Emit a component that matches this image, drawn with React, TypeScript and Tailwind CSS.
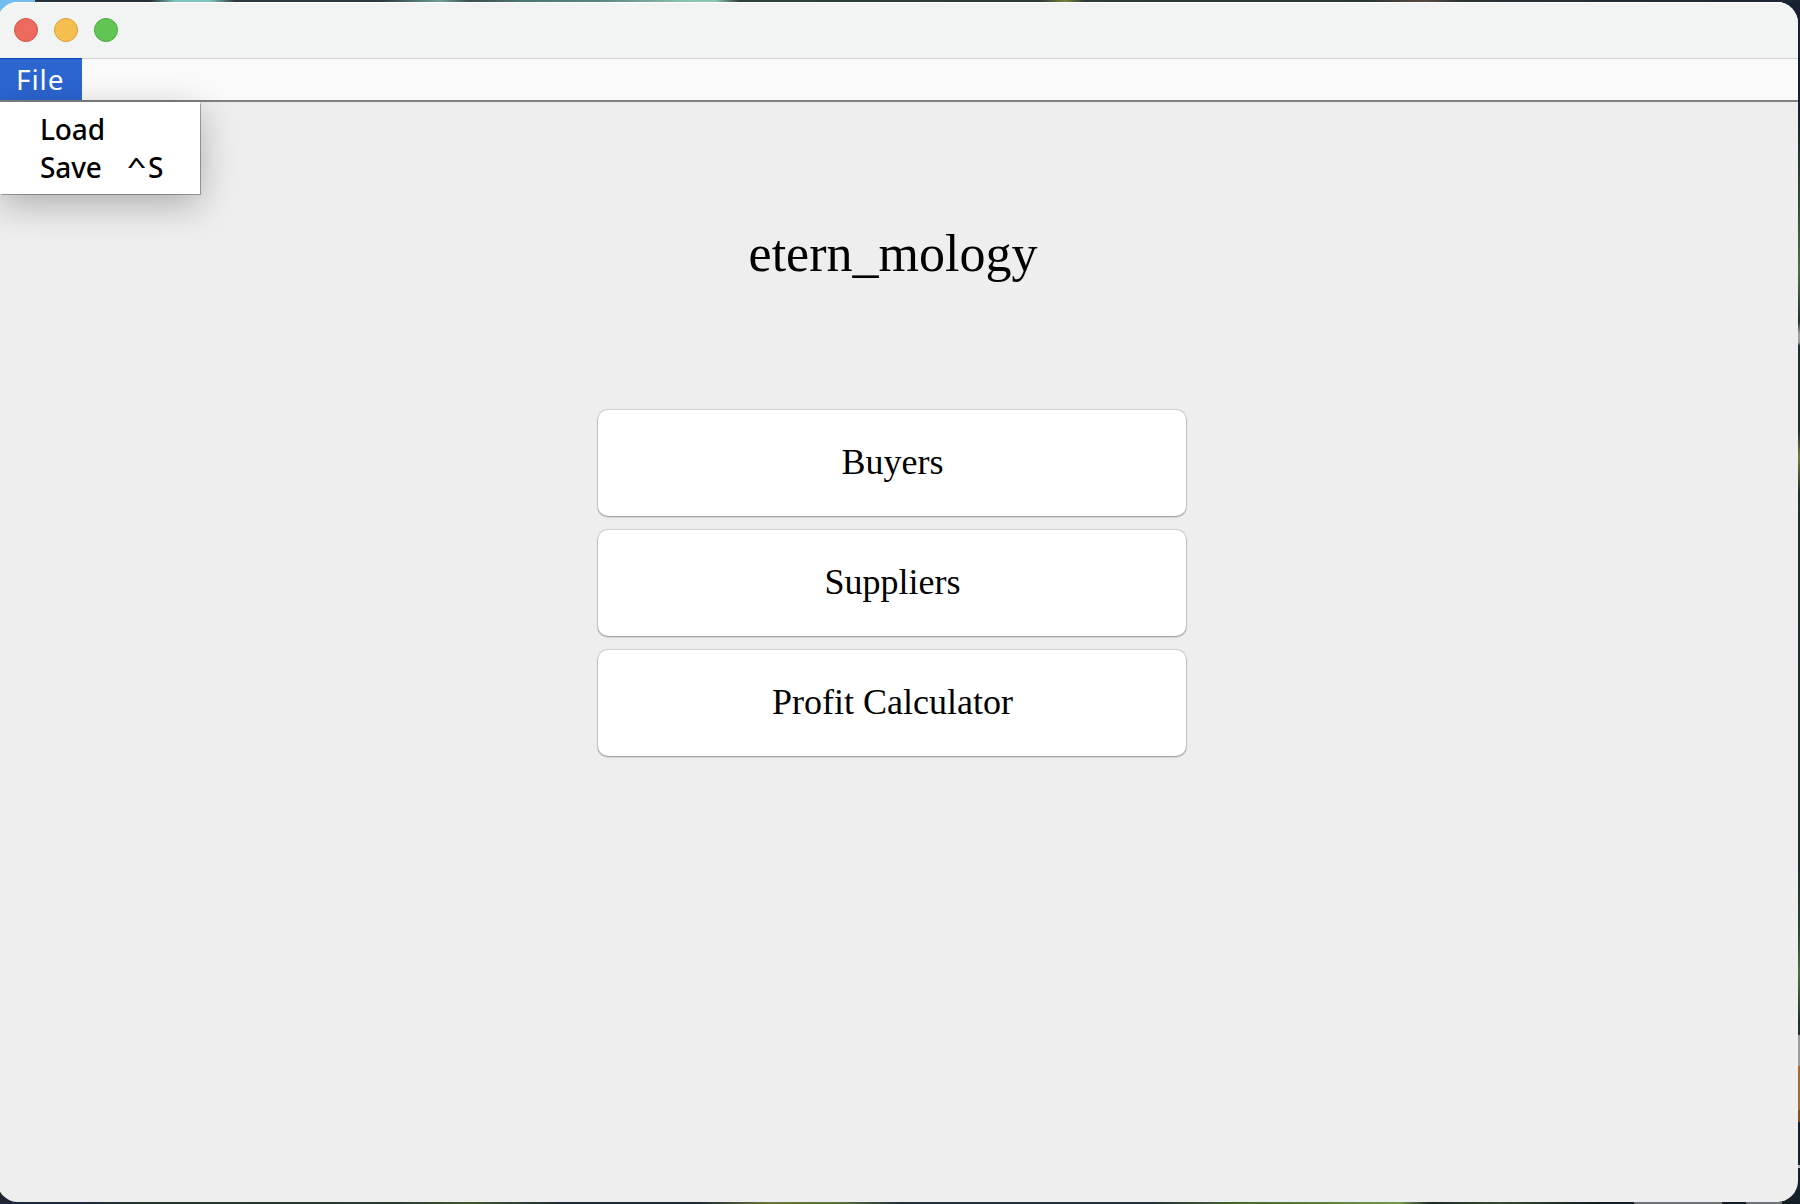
const lights = [
  "bg-[#ec6a5e] border-[#d1554a]",
  "bg-[#f5bf4f] border-[#d8a03c]",
  "bg-[#61c554] border-[#51a73e]",
];

const actions = ["Buyers", "Suppliers", "Profit Calculator"];

export default function App() {
  return (
    <div className="isolate flex h-[1204px] w-[1800px] flex-col overflow-hidden bg-[#1c2430]">
      {/* desktop wallpaper visible around the window */}
      <div className="h-0.5 shrink-0 bg-[linear-gradient(90deg,#74bdf0_0_35px,#26303a_35px_150px,#7cc4bd_175px_210px,#2a3a40_235px_380px,#3c5a5a_400px,#6f9f96_440px,#39504f_470px,#4c7470_520px,#5a8580_600px,#8fc4b4_690px_715px,#2c4038_740px,#2b3b38_1040px,#76803a_1065px,#2c3c38_1085px,#293636_1370px,#5a4a3c_1425px,#2a3434_1460px,#1a2434_1800px)]" />
      <div className="flex min-h-0 flex-1 bg-[linear-gradient(90deg,#74bdf0_0_35px,transparent_35px)] bg-[length:100%_40px] bg-no-repeat">
        <div className="-ml-[3px] flex min-w-0 flex-1 flex-col overflow-hidden rounded-[21px] bg-[#eeeeee] pl-[3px]">
          <header className="-ml-[3px] flex h-14 shrink-0 items-center gap-4 border-t border-white bg-[#f2f4f3] pb-0.5 pl-[17px]">
            {lights.map((c) => (
              <span key={c} className={"size-6 rounded-full border " + c} />
            ))}
          </header>
          <nav className="relative z-10 flex h-11 shrink-0 border-t border-b-2 border-t-[#d2d2d2] border-b-[#808080] bg-[#fafafa] font-['Noto_Sans',sans-serif] text-[28px]">
            <div className="-mt-px flex w-[82px] items-center border-t border-[#0b47b4] bg-[#2b65d0] pb-0.5 pl-4 leading-none tracking-[0.9px] text-white">
              File
            </div>
            <div className="absolute top-[43px] left-0 grid h-[92px] w-[200px] grid-cols-[62px_1fr] content-start bg-white pt-2 pl-10 leading-[38px] font-medium tracking-[-0.1px] text-black shadow-[0_0_1px_0.5px_rgba(0,0,0,0.3),0_10px_36px_rgba(0,0,0,0.28)]">
              <span className="col-span-2">Load</span>
              <span>Save</span>
              <span className="flex pl-[25px]">
                <span className="w-[21px] origin-[0_12px] scale-x-[1.2] scale-y-75">^</span>
                <span>S</span>
              </span>
            </div>
          </nav>
          <main className="flex flex-col items-center pr-[15px] font-['Liberation_Serif',serif] text-black">
            <h1 className="mt-[122px] ml-[3px] text-[52px] leading-[60px]">
              etern_mology
            </h1>
            <div className="mt-[126px] flex flex-col gap-[14px]">
              {actions.map((a) => (
                <button
                  key={a}
                  className="h-[106px] w-[588px] rounded-[10px] bg-white pb-[2px] pl-[2px] text-[36px] leading-none shadow-[0_0_1px_0.5px_rgba(0,0,0,0.1),0_1px_2px_rgba(0,0,0,0.32)]"
                >
                  {a}
                </button>
              ))}
            </div>
          </main>
        </div>
        <div className="-ml-6 w-[26px] shrink-0 -z-10 bg-[linear-gradient(180deg,#16202e_0_110px,#2c4432_180px,#4e6c48_270px,#22312c_320px,#a0a0a0_332px_340px,#1f2d2c_344px_430px,#747c38_455px,#20302c_490px,#1d2d2c_860px,#2b4632_930px,#4e7040_972px,#20302c_1020px_1033px,#9c9c9c_1033px_1064px,#ad6529_1064px_1108px,#8c4d1d_1108px_1120px,#15202a_1120px_1163px,#b4b8b8_1163px_1166px,#15202a_1166px)]" />
      </div>
      <div className="h-0.5 shrink-0 bg-[linear-gradient(90deg,#1e2740_0_80px,#22362c_140px,#2a3c30_400px,#41582c_470px,#1f2b34_560px_700px,#6a7838_770px,#56703c_840px,#22303a_900px_1150px,#43622e_1230px,#74984c_1400px,#1d2a26_1430px,#334a2c_1500px,#141c24_1600px_1634px,#6d7474_1634px_1722px,#141c24_1722px_1746px,#6d7474_1746px_1782px,#141c24_1782px)]" />
    </div>
  );
}
